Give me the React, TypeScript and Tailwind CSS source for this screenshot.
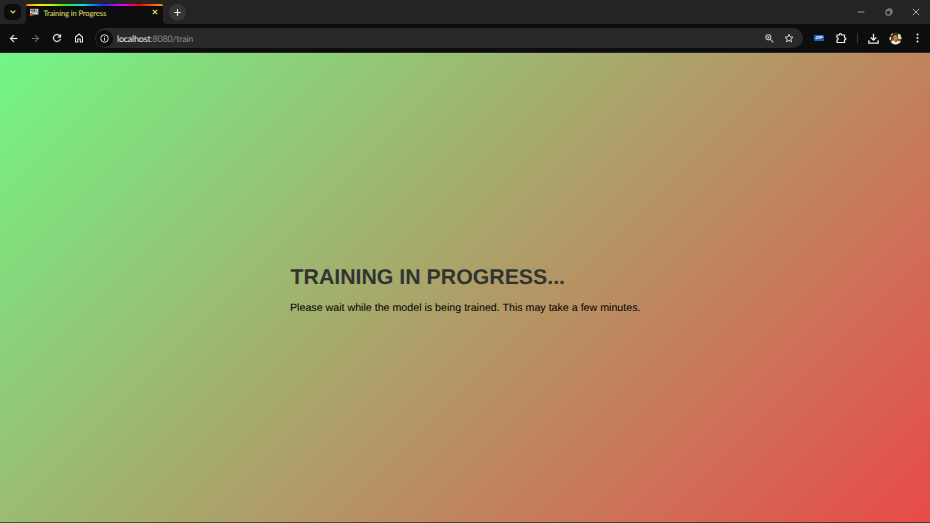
import React from "react";

function TabStrip() {
  return (
    <div className="flex h-6 w-full items-start bg-[#242424]">
      <div className="ml-1 mt-1 flex h-4 w-[17px] items-center justify-center rounded-[5px] bg-[#0d0d0d]">
        <svg width="6" height="4" viewBox="0 0 6 4" fill="none" stroke="#e9e96a" strokeWidth="1.2">
          <path d="M.7.7 3 3 5.3.7" />
        </svg>
      </div>
      <div className="relative ml-[5px] mt-1 h-5 w-[137px] rounded-t-[5px] bg-[#0d0d0d]">
        <svg className="absolute -left-[4px] bottom-0" width="4" height="4" viewBox="0 0 4 4" fill="#0d0d0d"><path d="M4 0v4H0Q4 4 4 0Z" /></svg>
        <svg className="absolute -right-[4px] bottom-0" width="4" height="4" viewBox="0 0 4 4" fill="#0d0d0d"><path d="M0 0v4h4Q0 4 0 0Z" /></svg>
        <div className="absolute left-0 top-0 h-[1.5px] w-full rounded-t-[3px] bg-[linear-gradient(90deg,#ff9000_0%,#ffee00_10%,#b8ee00_20%,#35ee00_28%,#00ddee_42%,#1030ff_56%,#e000ff_70%,#ff0000_83%,#ff9a00_100%)]" />
        <div className="flex h-[17px] items-center pl-[3px]">
          <svg width="10" height="9" viewBox="0 0 10 9">
            <rect x="1" y=".8" width="8.4" height="5.8" fill="#c9c9c9" />
            <path d="M2 2h2v1H2zM5 1h1v3H5zM7 2l2 3M3 5l3-2" fill="#444" stroke="#555" strokeWidth=".6" />
            <circle cx="2" cy="6.4" r="1.5" fill="#d84527" />
            <circle cx="4" cy="7" r=".8" fill="#2c7b3b" />
          </svg>
          <span className="ml-[4.5px] whitespace-nowrap text-[7.7px] leading-[10px] tracking-[-0.14px] text-[#e3e36a]">Training in Progress</span>
        </div>
        <svg className="absolute left-[126px] top-[5px]" width="6" height="6" viewBox="0 0 6 6" stroke="#eded55" strokeWidth="1.1">
          <path d="m.8.8 4.4 4.4M5.2.8.8 5.2" />
        </svg>
      </div>
      <div className="ml-[6px] mt-[4px] flex h-[17px] w-[17px] items-center justify-center rounded-full bg-[#363636]">
        <svg width="7" height="7" viewBox="0 0 7 7" stroke="#eee" strokeWidth="1.2">
          <path d="M3.5.3v6.4M.3 3.5h6.4" />
        </svg>
      </div>
      <div className="ml-auto mr-[10px] mt-[8px] flex gap-[19.5px]">
        <svg width="8" height="8" viewBox="0 0 8 8" stroke="#aaa" strokeWidth=".9"><path d="M.7 4h6.6" /></svg>
        <svg width="8" height="8" viewBox="0 0 8 8" fill="none" stroke="#bbb" strokeWidth=".8">
          <rect x="1" y="2.2" width="4.8" height="4.8" rx=".8" />
          <path d="M2.5 2.2V1.8q0-.8.8-.8h2.5q1.2 0 1.2 1.2v2.5q0 .8-.8.8H6" />
        </svg>
        <svg width="8" height="8" viewBox="0 0 8 8" stroke="#ccc" strokeWidth=".8"><path d="m.8.8 6.4 6.4M7.2.8.8 7.2" /></svg>
      </div>
    </div>
  );
}

function Toolbar() {
  return (
    <div className="flex h-[29px] w-full items-center border-b border-[#292929] bg-[#0d0d0d]">
      <svg className="ml-[8px]" width="11" height="11" viewBox="0 0 24 24" fill="#eee" stroke="#eee" strokeWidth=".6"><path d="M20 11H7.83l5.59-5.59L12 4l-8 8 8 8 1.41-1.41L7.83 13H20z" /></svg>
      <svg className="ml-[11px]" width="11" height="11" viewBox="0 0 24 24" fill="#747474"><path d="m12 4-1.41 1.41L16.17 11H4v2h12.17l-5.58 5.59L12 20l8-8z" /></svg>
      <svg className="ml-[10px]" width="12" height="12" viewBox="0 0 24 24" fill="#e8e8e8" stroke="#e8e8e8" strokeWidth=".5"><path d="M17.65 6.35A8 8 0 1 0 19.73 14h-2.08A6 6 0 1 1 12 6c1.66 0 3.14.69 4.22 1.78L13 11h7V4z" /></svg>
      <svg className="ml-[10px]" width="12" height="12" viewBox="0 0 24 24" fill="none" stroke="#e8e8e8" strokeWidth="2.1"><path d="M5 10v10h4.5v-6h5v6H19V10l-7-6z" /></svg>
      <div className="ml-[10px] flex h-5 w-[708px] items-center rounded-full bg-[#292929] pl-[1px]">
        <div className="flex h-[17px] w-[17px] items-center justify-center rounded-full bg-[#0d0d0d]">
          <svg width="9" height="9" viewBox="0 0 9 9" fill="none" stroke="#eee" strokeWidth=".9"><circle cx="4.5" cy="4.5" r="3.8" /><path d="M4.5 4v2.7M4.5 2.3v1" /></svg>
        </div>
        <span className="ml-[4px] whitespace-nowrap pt-px text-[9px] leading-[10px] tracking-[-0.22px] text-[#8d8d8d]"><span className="text-[#eeeeee]">localhost</span>:8080/train</span>
        <svg className="ml-auto" width="11" height="11" viewBox="0 0 24 24" fill="none" stroke="#c8c8c8" strokeWidth="2.2"><circle cx="9.5" cy="9.5" r="5.5" /><path d="m14 14 6.5 6.5M7 9.5h5M9.5 7v5" /></svg>
        <svg className="ml-[8px] mr-[8px]" width="12" height="12" viewBox="0 0 24 24" fill="none" stroke="#d0d0d0" strokeWidth="2"><path d="m12 4.5 2.3 5.2 5.7.6-4.3 3.8 1.3 5.6-5-3-5 3 1.3-5.6L4 10.3l5.7-.6z" /></svg>
      </div>
      <div className="ml-[11px] flex h-[6px] w-[10px] items-center justify-center rounded-[1px] bg-[#1767bd] font-['Liberation_Sans',sans-serif] text-[4.5px] font-bold italic leading-[6px] text-white">ZIP</div>
      <svg className="ml-[11px]" width="12" height="12" viewBox="0 0 24 24" fill="none" stroke="#eee" strokeWidth="2.4"><path d="M4 6h5V5a2 2 0 0 1 4 0v1h6v5.5h.6a2.2 2.2 0 0 1 0 4.4H19V21H4v-5a2.5 2.5 0 0 0 0-5z" /></svg>
      <div className="ml-[10px] h-[10px] w-px bg-[#383838]" />
      <svg className="ml-[9px]" width="13" height="13" viewBox="0 0 24 24" fill="none" stroke="#eee" strokeWidth="2.4"><path d="M12 3v12m-5-5 5 5 5-5M3.5 15v5.5h17V15" /></svg>
      <svg className="ml-[9px]" width="13" height="13" viewBox="0 0 13 13">
        <clipPath id="avatar"><circle cx="6.5" cy="6.5" r="6" /></clipPath>
        <g clipPath="url(#avatar)">
          <path fill="#4a531f" d="M0 0h13v13H0z" />
          <path fill="#e3dba0" d="M2 1h2v2H2zM9 2h4v5H9zM0 5h2v3H0z" />
          <path fill="#281b15" d="M3.5 1.5h5v4h-5z" />
          <ellipse cx="6.3" cy="5.8" rx="2.1" ry="3" fill="#c27c4b" />
          <path fill="#f5eee7" d="M2 13 2.5 9l2.5-.8 2 2.3 2-2.6 3 1.5v4z" />
          <path fill="#aa422d" d="M9 7.5h3v1.8H9z" />
        </g>
      </svg>
      <svg className="ml-[13.5px]" width="3" height="10" viewBox="0 0 3 10" fill="#eee"><circle cx="1.5" cy="1.4" r="1" /><circle cx="1.5" cy="5" r="1" /><circle cx="1.5" cy="8.6" r="1" /></svg>
    </div>
  );
}

export default function App() {
  return (
    <div className="flex h-[523px] w-[930px] flex-col overflow-hidden font-['Lato','Open_Sans',sans-serif] [text-rendering:geometricPrecision]">
      <TabStrip />
      <Toolbar />
      <main className="flex flex-1 flex-col items-center border-b border-black/60 bg-[linear-gradient(135deg,#72f686_0%,#e84a4a_100%)] font-['Liberation_Sans',Arial,sans-serif]">
        <div className="mt-[212px] w-[350px]">
          <h1 className="whitespace-nowrap pl-[0.5px] text-[21.3px] font-bold leading-[25px] text-[#333333]">TRAINING IN PROGRESS...</h1>
          <p className="mt-[12px] whitespace-nowrap text-[10.67px] leading-[13px] text-black">Please wait while the model is being trained. This may take a few minutes.</p>
        </div>
      </main>
    </div>
  );
}
